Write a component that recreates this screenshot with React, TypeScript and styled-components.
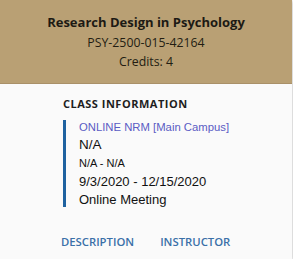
import React from 'react';
import styled, { createGlobalStyle } from 'styled-components';

const GlobalStyle = createGlobalStyle`
  html, body {
    margin: 0;
    padding: 0;
    background: #ffffff;
  }
`;

const Card = styled.div`
  width: 292px;
  height: 259px;
  background: #fafafa;
  box-shadow: 0 1px 3px rgba(0, 0, 0, 0.35);
  display: flex;
  flex-direction: column;
  overflow: hidden;
`;

const Header = styled.div`
  height: 84px;
  box-sizing: border-box;
  background: #b9a074;
  border-bottom: 1px solid #a99068;
  display: flex;
  flex-direction: column;
  align-items: center;
  padding-top: 12px;
  font-family: "Open Sans", sans-serif;
  color: #1d1a14;
`;

const Title = styled.div`
  font-size: 13px;
  font-weight: 700;
  line-height: 20px;
  margin-bottom: 1px;
`;

const SubLine = styled.div`
  font-size: 12.3px;
  line-height: 19px;
  color: #231d12;
`;

const Body = styled.div`
  flex: 1;
  padding: 13px 20px 0 62px;
  display: flex;
  flex-direction: column;
`;

const SectionLabel = styled.div`
  font-family: "Open Sans", sans-serif;
  font-size: 11px;
  font-weight: 700;
  letter-spacing: 0.5px;
  color: #1e1e1e;
  line-height: 14px;
  margin-bottom: 9px;
  margin-left: 1px;
`;

const Info = styled.div`
  border-left: 3px solid #1f62a0;
  padding-left: 13px;
  margin-left: 1px;
  font-family: "Liberation Sans", Arial, sans-serif;
  color: #111;
  display: flex;
  flex-direction: column;
`;

const Line = styled.div<{ $size: number; $color?: string; $h: number }>`
  font-size: ${(p) => p.$size}px;
  line-height: ${(p) => p.$h}px;
  color: ${(p) => p.$color || '#111'};
`;

const Actions = styled.div`
  display: flex;
  gap: 26px;
  margin-top: 27px;
  margin-left: -1px;
`;

const ActionButton = styled.button`
  background: none;
  border: none;
  padding: 0;
  font-family: "Open Sans", sans-serif;
  font-size: 11.3px;
  font-weight: 600;
  color: #3a70a8;
  cursor: pointer;
`;

export default function App() {
  return (
    <>
      <GlobalStyle />
      <Card>
        <Header>
          <Title>Research Design in Psychology</Title>
          <SubLine>PSY-2500-015-42164</SubLine>
          <SubLine>Credits: 4</SubLine>
        </Header>
        <Body>
          <SectionLabel>CLASS INFORMATION</SectionLabel>
          <Info>
            <Line $size={11.3} $h={14} $color="#5a5cc4">ONLINE NRM [Main Campus]</Line>
            <Line $size={13.5} $h={22}>N/A</Line>
            <Line $size={11} $h={15}>N/A - N/A</Line>
            <Line $size={13} $h={22}>9/3/2020 - 12/15/2020</Line>
            <Line $size={13} $h={14}>Online Meeting</Line>
          </Info>
          <Actions>
            <ActionButton>DESCRIPTION</ActionButton>
            <ActionButton>INSTRUCTOR</ActionButton>
          </Actions>
        </Body>
      </Card>
    </>
  );
}
